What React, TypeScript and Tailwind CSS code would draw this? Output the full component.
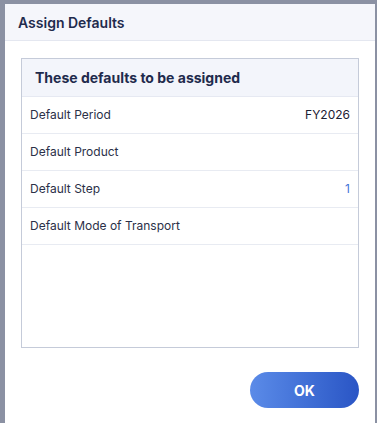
import React from 'react';

const rows: { label: string; value?: string; accent?: boolean }[] = [
  { label: 'Default Period', value: 'FY2026' },
  { label: 'Default Product' },
  { label: 'Default Step', value: '1', accent: true },
  { label: 'Default Mode of Transport' },
];

export default function App() {
  return (
    <div
      className="w-[377px] h-[423px] overflow-hidden bg-[#8b91a3] pt-[4px] pl-[5px] pr-[2px]"
      style={{ fontFamily: 'Inter, "Noto Sans", sans-serif' }}
    >
      <div className="bg-white h-[440px] flex flex-col">
        <div className="h-[37px] bg-[#f5f6fb] border-b border-[#e4e7f0] flex items-center px-[13px]">
          <h2 className="text-[14px] font-semibold text-[#1f2b4d]">Assign Defaults</h2>
        </div>

        <div className="px-[16px] pt-[17px]">
          <div className="border border-[#c5cbd9] h-[290px] flex flex-col">
            <div className="h-[38px] shrink-0 bg-[#f3f5fb] border-b border-[#e6e9f2] flex items-center px-[13px]">
              <h3 className="text-[14px] font-bold text-[#1f2b4d]">These defaults to be assigned</h3>
            </div>
            {rows.map((row) => (
              <div
                key={row.label}
                className="h-[37px] shrink-0 border-b border-[#e8ebf2] flex items-center justify-between pl-[8px] pr-[8px]"
              >
                <span className="text-[12px] text-[#2b3048]">{row.label}</span>
                {row.value && (
                  <span className={`text-[12px] ${row.accent ? 'text-[#3f74d8]' : 'text-[#1c2033]'}`}>
                    {row.value}
                  </span>
                )}
              </div>
            ))}
          </div>
        </div>

        <div className="flex justify-end pr-[16px] pt-[24px]">
          <button
            type="button"
            className="w-[109px] h-[36px] rounded-full bg-gradient-to-r from-[#5b8be8] to-[#2a55c5] text-white text-[14px] font-bold"
          >
            OK
          </button>
        </div>
      </div>
    </div>
  );
}
